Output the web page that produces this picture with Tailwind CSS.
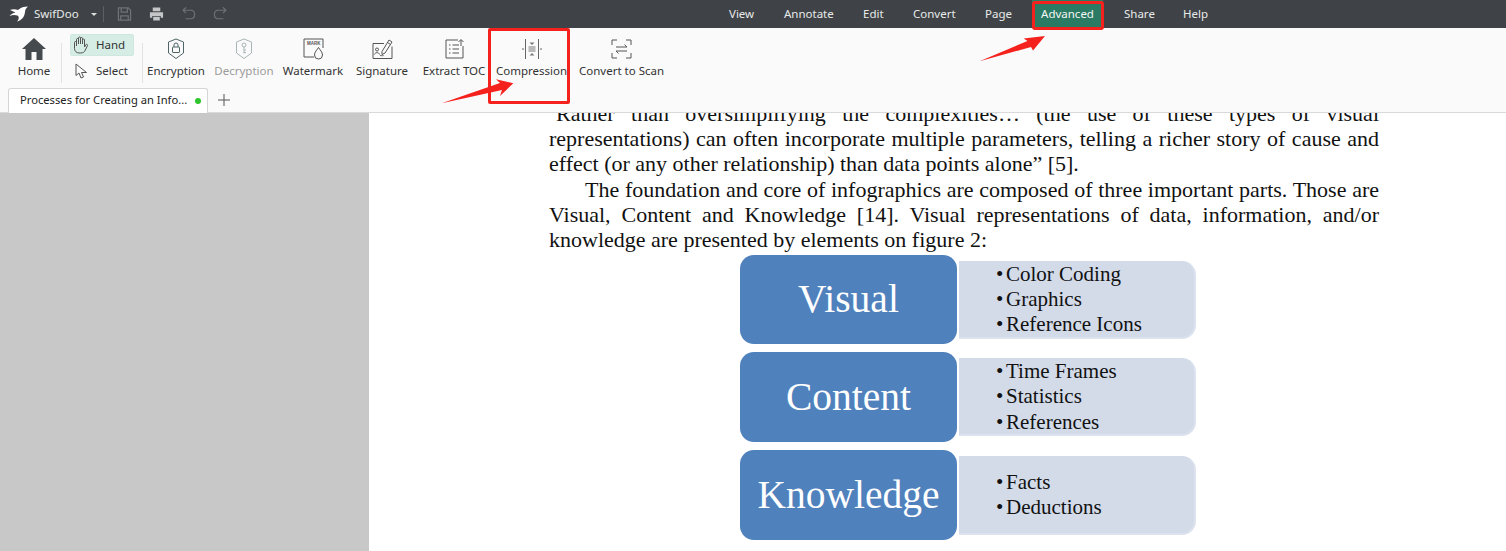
<!DOCTYPE html>
<html lang="en">
<head>
  <meta charset="UTF-8">
  <title>SwifDoo PDF</title>
  <script src="https://cdn.jsdelivr.net/npm/@tailwindcss/browser@4"></script>
</head>
<body class="relative w-[1506px] h-[551px] overflow-hidden bg-white font-['Noto_Sans','Open_Sans',sans-serif] text-[11.5px] text-[#333]">
  <!-- title bar -->
  <header class="relative flex items-center h-[28px] bg-[#3f4347] text-[#e8eaea]">
    <svg class="ml-[9px] w-[19px] h-[16px]" viewBox="0 0 19 16"><path fill="#fff" d="M19 .5C15 .5 11.500 1.500 9 4 6.500 3 3.500 3 1 4L6.500 6.500C4 7 2 8 .5 10 3 8.800 6 8.500 8.500 9.500 10.500 11 10 13.500 8 15.500 12.500 14.500 15.500 11 16 6 16.200 3.800 17 2 19 .5Z"/></svg>
    <span class="ml-[6px] w-[48px]">SwifDoo</span>
    <span class="ml-[9px] w-0 h-0 border-x-[3.500px] border-x-transparent border-t-[3.500px] border-t-[#ddd]"></span>
    <span class="ml-[6px] w-px h-[16px] bg-[#5c6064]"></span>
    <svg class="ml-[13px] w-[15px] h-[16px]" viewBox="0 0 16 16" fill="none" stroke="#6f7377" stroke-width="1.300"><path d="M1.500 1.500H12L14.500 4V14.500H1.500Z"/><path d="M4.500 1.500V6H11V1.500M4 14.500V10H12V14.500"/></svg>
    <svg class="ml-[17px] w-[15px] h-[16px]" viewBox="0 0 16 16"><path fill="#c4c6c8" d="M4 1H12V5H4ZM1 6H15V12H12.500V10H3.500V12H1ZM4.500 11H11.500V15H4.500Z"/></svg>
    <svg class="ml-[17px] w-[15px] h-[16px]" viewBox="0 0 16 16" fill="none" stroke="#6f7377" stroke-width="1.200"><path d="M2 4H10.500C13 4 14.500 6 14.500 8.500S13 13 10.500 13H5M2 4 5.500 1M2 4 5.500 7"/></svg>
    <svg class="ml-[17px] w-[15px] h-[16px]" viewBox="0 0 16 16" fill="none" stroke="#6f7377" stroke-width="1.200"><path d="M14 4H5.500C3 4 1.500 6 1.500 8.500S3 13 5.500 13H11M14 4 10.500 1M14 4 10.500 7"/></svg>
    <nav class="absolute left-[729px] top-0 h-[28px] flex items-center">
      <span class="w-[55px]">View</span>
      <span class="w-[79px]">Annotate</span>
      <span class="w-[50px]">Edit</span>
      <span class="w-[72px]">Convert</span>
      <span class="w-[47px]">Page</span>
      <span class="w-[71px] h-[28px] flex items-center justify-center bg-[#2b7a63] text-[#f2f6f5]">Advanced</span>
      <span class="ml-[21px] w-[59px]">Share</span>
      <span>Help</span>
    </nav>
  </header>

  <!-- ribbon -->
  <div class="flex h-[60px] bg-[#fafafa] pt-[5px]">
    <div class="ml-[17px] w-[34px] flex flex-col items-center">
      <svg class="mt-[5px] w-[24px] h-[22px]" viewBox="0 0 24 22"><path fill="#454a4e" d="M12 0 24 11H20.500V22H14.500V14H9.500V22H3.500V11H0Z"/></svg>
      <span class="mt-[2px] whitespace-nowrap">Home</span>
    </div>
    <span class="ml-[10px] mt-[10px] w-px h-[40px] bg-[#e2e2e2]"></span>
    <div class="ml-[8px] w-[64px] flex flex-col">
      <div class="flex items-center h-[22px] mt-[1px] rounded-[2px] bg-[#d6ede5] border border-[#cfe8df]">
        <svg class="ml-[2px] w-[16px] h-[18px]" viewBox="0 0 16 18" fill="none" stroke="#555" stroke-width="1"><path d="M3.500 10V3.500a1 1 0 0 1 2 0V8M5.500 8V2a1 1 0 0 1 2 0V8M7.500 8V2.500a1 1 0 0 1 2 0V8M9.500 8V4a1 1 0 0 1 2 0V11L13 8.500a1 1 0 0 1 1.500 1.200L11.500 15.500C10.500 17 8 17 6 17 3.500 17 1.500 15 1.500 12.500V6.500a1 1 0 0 1 2 0"/></svg>
        <span class="ml-[7px]">Hand</span>
      </div>
      <div class="flex items-center h-[22px] mt-[4px]">
        <svg class="ml-[5px] w-[13px] h-[16px]" viewBox="0 0 13 16" fill="none" stroke="#555" stroke-width="1"><path d="M1 1V12.500L4 10 6 15 8.500 14 6.500 9.500H11.500Z"/></svg>
        <span class="ml-[8px]">Select</span>
      </div>
    </div>
    <span class="ml-[8px] mt-[10px] w-px h-[40px] bg-[#e2e2e2]"></span>
    <div class="ml-[3px] w-[60px] flex flex-col items-center">
      <svg class="mt-[5px] w-[18px] h-[22px]" viewBox="0 0 18 22" fill="none" stroke="#4f6468" stroke-width="1"><path d="M9 1 16.500 4V15L9 20.500 1.500 15V4Z"/><rect x="5.500" y="9" width="7" height="5.500" rx=".5"/><path d="M7 9V7a2 2 0 0 1 4 0V9"/></svg>
      <span class="mt-[2px] whitespace-nowrap">Encryption</span>
    </div>
    <div class="ml-[8px] w-[60px] flex flex-col items-center text-[#9b9b9b]">
      <svg class="mt-[5px] w-[18px] h-[22px]" viewBox="0 0 18 22" fill="none" stroke="#a9b5b6" stroke-width="1"><path d="M9 1 16.500 4V15L9 20.500 1.500 15V4Z"/><circle cx="9" cy="7" r="2"/><path d="M9 9V15.500M9 12H11M9 14.500H11"/></svg>
      <span class="mt-[2px] whitespace-nowrap">Decryption</span>
    </div>
    <div class="ml-[9px] w-[60px] flex flex-col items-center">
      <svg class="mt-[5px] w-[21px] h-[22px]" viewBox="0 0 21 22" fill="none" stroke="#555" stroke-width="1"><path d="M20 10V1H1V19H11"/><text x="4" y="7" font-size="4.500" font-weight="700" fill="#555" stroke="none" font-family="Liberation Sans, sans-serif">MARK</text><path fill="#fafafa" d="M15.500 9.500C17 12 19.500 14 19.500 17a4 4 0 0 1-8 0C11.500 14 14 12 15.500 9.500Z"/></svg>
      <span class="mt-[2px] whitespace-nowrap">Watermark</span>
    </div>
    <div class="ml-[9px] w-[60px] flex flex-col items-center">
      <svg class="mt-[5px] w-[21px] h-[22px]" viewBox="0 0 21 21" fill="none" stroke="#555" stroke-width="1"><path d="M12 5H1V20H20V8"/><path fill="#fafafa" d="M10 13 17 1.500 20 3.500 13 14.500 10 16Z"/><path d="M15.500 4 18.500 6"/><circle cx="5" cy="11" r="1.500"/><path d="M2.500 16C3 13.500 7 13.500 7.500 16M8 17.500C9 16 10 18 11.500 17"/></svg>
      <span class="mt-[2px] whitespace-nowrap">Signature</span>
    </div>
    <div class="ml-[11px] w-[62px] flex flex-col items-center">
      <svg class="mt-[5px] w-[19px] h-[22px]" viewBox="0 0 19 20" fill="none" stroke="#555" stroke-width="1"><path d="M13 1H1V19H18V7"/><path d="M16 7V1M13.500 3 16 .5 18.500 3M4 6H5.500M7.500 6H14M4 10H5.500M7.500 10H14M4 14H5.500M7.500 14H14"/></svg>
      <span class="mt-[2px] whitespace-nowrap">Extract TOC</span>
    </div>
    <div class="ml-[11px] w-[71px] flex flex-col items-center">
      <svg class="mt-[5px] w-[20px] h-[22px]" viewBox="0 0 20 20" fill="none" stroke="#666" stroke-width="1"><path d="M3.500 0V20M16.500 0V20M0 10H2M18 10H20"/><path stroke="#777" d="M6.500 8H13.500M6.500 10H13.500M6.500 12H13.500"/><path fill="#777" stroke="none" d="M10 6 7.500 3.500H12.500ZM10 14 7.500 16.500H12.500Z"/></svg>
      <span class="mt-[2px] whitespace-nowrap">Compression</span>
    </div>
    <div class="ml-[12px] w-[85px] flex flex-col items-center">
      <svg class="mt-[5px] w-[21px] h-[22px]" viewBox="0 0 21 20" fill="none" stroke="#555" stroke-width="1"><path d="M1 6V1H6M15 1H20V6M1 14V19H6M15 19H20V14M5 8H16L13.500 5.500M16 12H5L7.500 14.500"/></svg>
      <span class="mt-[2px] whitespace-nowrap">Convert to Scan</span>
    </div>
  </div>

  <!-- tab strip -->
  <div class="flex h-[25px] bg-[#fafafa] border-b border-[#d9d9d9]">
    <div class="ml-[8px] w-[200px] h-[25px] flex items-center bg-white border border-b-0 border-[#d6d6d6] rounded-t-[3px]">
      <span class="ml-[11px] -mt-[1px] whitespace-nowrap text-[11.200px] text-[#222]">Processes for Creating an Info...</span>
      <span class="ml-[8px] w-[6px] h-[6px] rounded-full bg-[#2fc52f]"></span>
    </div>
    <svg class="ml-[10px] mt-[6px] w-[12px] h-[12px]" viewBox="0 0 12 12" stroke="#555" stroke-width="1"><path d="M6 0V12M0 6H12"/></svg>
  </div>

  <!-- document area -->
  <main class="flex h-[438px] overflow-hidden">
    <aside class="w-[369px] bg-[#c8c8c8]"></aside>
    <div class="flex-1 bg-white pl-[180px] font-['Liberation_Serif',serif] text-[22px] leading-[25.2px] text-[#111]">
      <div class="w-[830px] -mt-[12px] text-justify [text-align-last:justify]">
        <p class="whitespace-nowrap pl-[7px]">Rather than oversimplifying the complexities… (the use of these types of visual</p>
        <p class="whitespace-nowrap">representations) can often incorporate multiple parameters, telling a richer story of cause and</p>
        <p class="[text-align-last:left]">effect (or any other relationship) than data points alone” [5].</p>
        <p class="whitespace-nowrap pl-[36px]">The foundation and core of infographics are composed of three important parts. Those are</p>
        <p class="whitespace-nowrap">Visual, Content and Knowledge [14]. Visual representations of data, information, and/or</p>
        <p class="[text-align-last:left]">knowledge are presented by elements on figure 2:</p>
      </div>
      <div class="ml-[191px] mt-[3px] flex flex-col gap-[8px]">
        <div class="flex items-center">
          <div class="w-[217px] h-[89px] rounded-[14px] bg-[#4f81bd] flex items-center justify-center text-white text-[39.5px]">Visual</div>
          <div class="ml-[2px] w-[237px] h-[78px] rounded-r-[14px] bg-[#d3dbe9] border-r-2 border-b-2 border-[#dce3ee] pl-[37px] pt-[1px] text-[21px] leading-[25.200px]">
            <p><span class="inline-block w-[10px]">•</span>Color Coding</p><p><span class="inline-block w-[10px]">•</span>Graphics</p><p><span class="inline-block w-[10px]">•</span>Reference Icons</p>
          </div>
        </div>
        <div class="flex items-center">
          <div class="w-[217px] h-[90px] rounded-[14px] bg-[#4f81bd] flex items-center justify-center text-white text-[39.5px]">Content</div>
          <div class="ml-[2px] w-[237px] h-[78px] rounded-r-[14px] bg-[#d3dbe9] border-r-2 border-b-2 border-[#dce3ee] pl-[37px] pt-[1px] text-[21px] leading-[25.200px]">
            <p><span class="inline-block w-[10px]">•</span>Time Frames</p><p><span class="inline-block w-[10px]">•</span>Statistics</p><p><span class="inline-block w-[10px]">•</span>References</p>
          </div>
        </div>
        <div class="flex items-center">
          <div class="w-[217px] h-[90px] rounded-[14px] bg-[#4f81bd] flex items-center justify-center text-white text-[39.5px]">Knowledge</div>
          <div class="ml-[2px] w-[237px] h-[79px] rounded-r-[14px] bg-[#d3dbe9] border-r-2 border-b-2 border-[#dce3ee] pl-[37px] pt-[14px] text-[21px] leading-[25.200px]">
            <p><span class="inline-block w-[10px]">•</span>Facts</p><p><span class="inline-block w-[10px]">•</span>Deductions</p>
          </div>
        </div>
      </div>
    </div>
  </main>

  <!-- red annotations over the screenshot -->
  <div class="absolute left-[488px] top-[28px] w-[82px] h-[76px] border-[3px] border-[#f5211d] rounded-[2px]"></div>
  <div class="absolute left-[1032px] top-[1px] w-[72px] h-[29px] border-[3px] border-[#f5211d] rounded-[3px]"></div>
  <svg class="absolute left-[440px] top-[76px] w-[96px] h-[32px]" viewBox="0 0 96 32"><path fill="#f5211d" d="M1.700 27.300 60 7 56 3.300 73.300 7.300 60 20 62 14Z"/></svg>
  <svg class="absolute left-[978px] top-[30px] w-[70px] h-[32px]" viewBox="0 0 70 32"><path fill="#f5211d" d="M1.600 31.300 49.500 11 45.700 8.600 67 6 55 20.600 53 17Z"/></svg>
</body>
</html>
